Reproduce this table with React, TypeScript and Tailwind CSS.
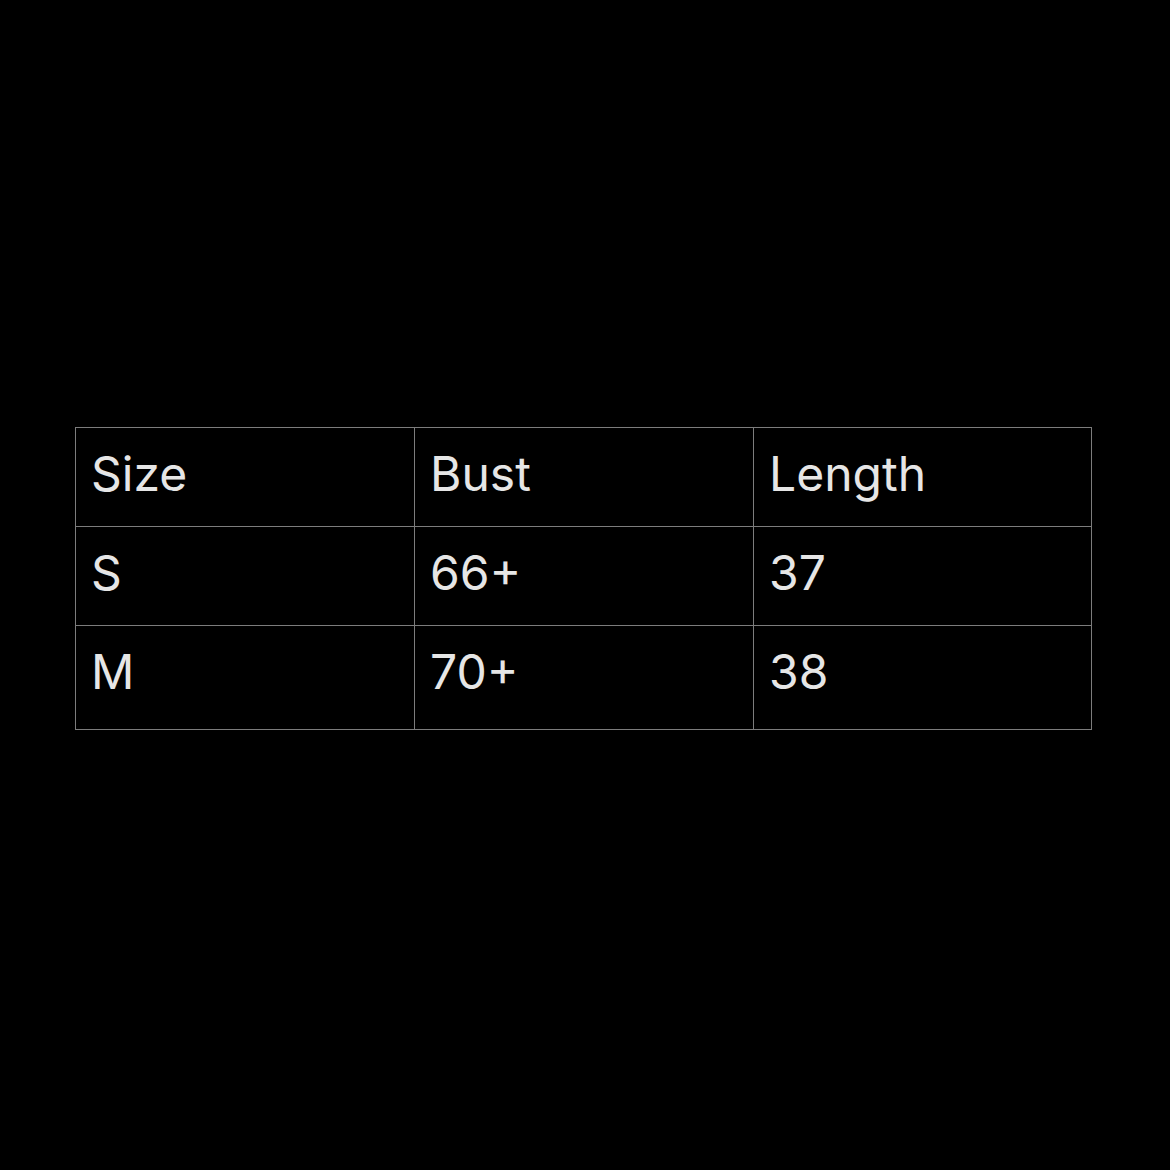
export default function App() {
  const rows = [
    { cells: ["Size", "Bust", "Length"], h: "h-[99px] pb-[6px]" },
    { cells: ["S", "66+", "37"], h: "h-[99px] pb-[6px]" },
    { cells: ["M", "70+", "38"], h: "h-[104px] pb-[12px]" },
  ];

  return (
    <div className="h-[1170px] w-[1170px] bg-black pt-[427px] pl-[75px] font-['Inter',sans-serif]">
      <div className="grid w-[1017px] grid-cols-[339px_339px_338px] border-l border-t border-[#7c7c7c]">
        {rows.map((row, i) =>
          row.cells.map((c, j) => (
            <div
              key={`${i}-${j}`}
              className={`${row.h} flex items-center border-r border-b border-[#7c7c7c] pl-[15px] text-[48px] text-[#e6e6e6]`}
            >
              {c}
            </div>
          ))
        )}
      </div>
    </div>
  );
}
